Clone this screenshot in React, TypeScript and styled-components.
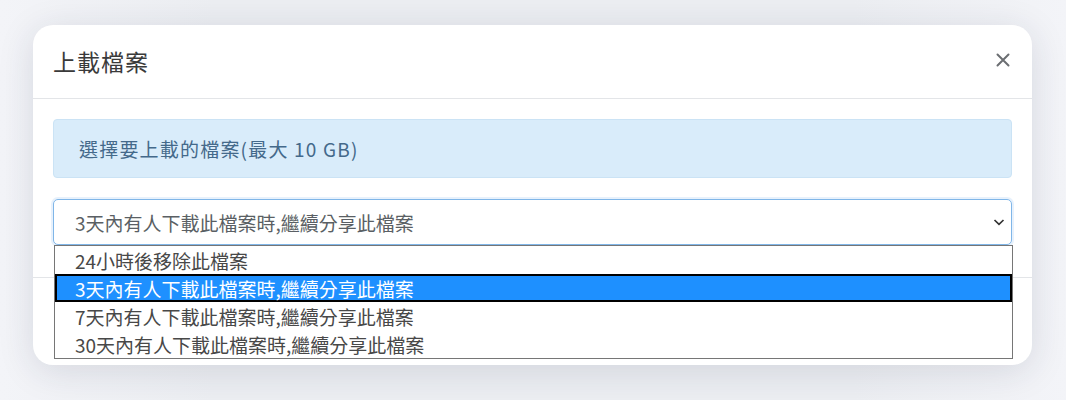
import React from "react";
import styled, { createGlobalStyle } from "styled-components";

const GlobalStyle = createGlobalStyle`
  html, body {
    margin: 0;
    padding: 0;
    background: #f1f2f6;
    font-family: "Noto Sans CJK TC", "Noto Sans", sans-serif;
  }
  * { box-sizing: border-box; }
`;

const Page = styled.div`
  width: 1066px;
  height: 400px;
  padding: 25px 34px 0 33px;
  background: linear-gradient(90deg, #f3f4f8 0%, #eceef2 20%, #eceef2 80%, #f3f4f8 100%);
  overflow: hidden;
`;

const Modal = styled.div`
  width: 999px;
  background: #fff;
  border-radius: 20px;
  box-shadow: 0 6px 36px rgba(30, 40, 70, 0.13);
  display: flex;
  flex-direction: column;
`;

const Header = styled.div`
  height: 74px;
  display: flex;
  align-items: center;
  justify-content: space-between;
  padding: 0 21px 0 20px;
  border-bottom: 1px solid #e3e5e8;
`;

const Title = styled.h5`
  margin: 0;
  font-size: 23px;
  font-weight: 400;
  color: #3a3a3a;
  line-height: 1;
  letter-spacing: 1px;
  font-family: "Noto Sans CJK TC", sans-serif;
`;

const CloseButton = styled.button`
  border: 0;
  background: transparent;
  padding: 0;
  width: 16px;
  height: 16px;
  display: flex;
  align-items: center;
  justify-content: center;
  margin-top: -3px;
  cursor: pointer;
`;

const Body = styled.div`
  padding: 20px 20px 32px;
  display: flex;
  flex-direction: column;
  gap: 21px;
`;

const Alert = styled.div`
  height: 59px;
  display: flex;
  align-items: center;
  padding: 0 25px;
  background: #d9ecfa;
  border: 1px solid #cbe3f5;
  border-radius: 4px;
  color: #44698a;
  font-size: 19px;
  letter-spacing: 1.2px;
  line-height: 1;
`;

const SelectWrap = styled.div`
  position: relative;
`;

const SelectBox = styled.div`
  height: 46px;
  display: flex;
  align-items: center;
  justify-content: space-between;
  padding: 0 5px 0 21px;
  border: 1px solid #80b6e8;
  border-radius: 5px;
  box-shadow: 0 0 0 2px rgba(120, 180, 240, 0.18);
  color: #5a5f64;
  font-size: 19px;
  line-height: 1;
  background: #fff;
`;

const OptionList = styled.ul`
  position: absolute;
  top: 100%;
  left: 1px;
  width: 959px;
  margin: 0;
  padding: 0;
  list-style: none;
  background: #fff;
  border: 1px solid #767676;
  z-index: 5;
`;

const OptionItem = styled.li<{ $active?: boolean }>`
  height: 28px;
  display: flex;
  align-items: center;
  padding-left: 20px;
  font-size: 19px;
  line-height: 1;
  color: ${(p) => (p.$active ? "#fff" : "#484848")};
  background: ${(p) => (p.$active ? "#1e90ff" : "#fff")};
  box-shadow: ${(p) => (p.$active ? "inset 0 0 0 2px #000" : "none")};
`;

const Footer = styled.div`
  height: 88px;
  border-top: 1px solid #e3e5e8;
`;

const options = [
  "24小時後移除此檔案",
  "3天內有人下載此檔案時,繼續分享此檔案",
  "7天內有人下載此檔案時,繼續分享此檔案",
  "30天內有人下載此檔案時,繼續分享此檔案",
];

export default function App() {
  return (
    <>
      <GlobalStyle />
      <Page>
        <Modal>
          <Header>
            <Title>上載檔案</Title>
            <CloseButton aria-label="Close">
              <svg width="14" height="14" viewBox="0 0 14 14">
                <path d="M1.5 1.5L12.5 12.5M12.5 1.5L1.5 12.5" stroke="#6b6e72" strokeWidth="2" strokeLinecap="round" />
              </svg>
            </CloseButton>
          </Header>
          <Body>
            <Alert>選擇要上載的檔案(最大 10 GB)</Alert>
            <SelectWrap>
              <SelectBox>
                <span>{options[1]}</span>
                <svg width="14" height="10" viewBox="0 0 14 10">
                  <path d="M2.5 3L7 7.3L11.5 3" fill="none" stroke="#333" strokeWidth="1.7" />
                </svg>
              </SelectBox>
              <OptionList>
                {options.map((o, i) => (
                  <OptionItem key={o} $active={i === 1}>
                    {o}
                  </OptionItem>
                ))}
              </OptionList>
            </SelectWrap>
          </Body>
          <Footer />
        </Modal>
      </Page>
    </>
  );
}
